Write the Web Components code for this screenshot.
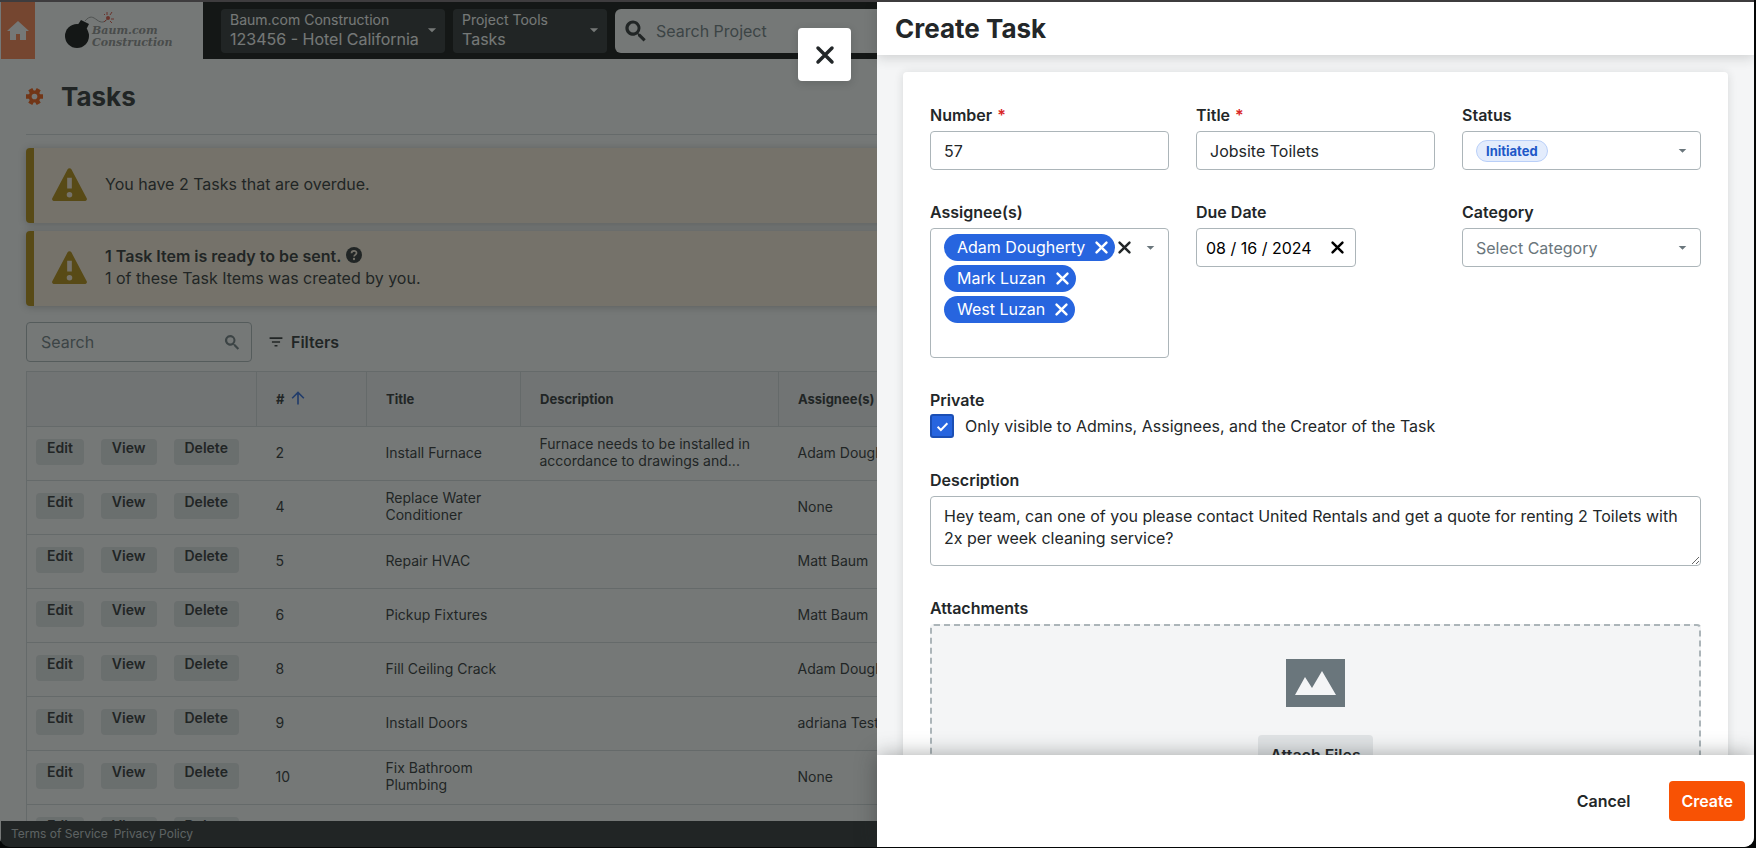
<!DOCTYPE html>
<html lang="en">
<head>
<meta charset="utf-8">
<title>Tasks</title>
<style>
  html, body { height: 100%; }
  body {
    margin: 0;
    background: #050707;
    color: #232729;
    font: 16px/22px Inter, "Liberation Sans", sans-serif;
    --muted: #6a767c;
    --line: #acb5b9;
    --blue: #2765df;
    --orange: #f85204;
  }
</style>
</head>
<body>
<task-app></task-app>

<script>
const icons = {
  home: '<path d="M12 2 1 12h3v9h6v-6h4v6h6v-9h3z"/>',
  caret: '<path d="M5 9h14l-7 7z"/>',
  search: '<path fill-rule="evenodd" d="M9.500 1.500a8 8 0 1 0 4.600 14.500l.5.500v1.200l5.800 5.800 2.300-2.300-5.800-5.800h-1.200l-.6-.6A8 8 0 0 0 9.500 1.500zm0 3.300a4.700 4.700 0 1 1 0 9.400 4.700 4.700 0 0 1 0-9.400z"/>',
  close: '<path d="M5 5 19 19M19 5 5 19" fill="none" stroke="currentColor" stroke-width="3.500" stroke-linecap="round"/>',
  filter: '<path d="M1 4h22v2.800H1zM5 10.500h14v2.800H5zM9.500 17h5v2.800h-5z"/>',
  arrow: '<path d="M12 23V3M2 12.500l10-10 10 10" fill="none" stroke="currentColor" stroke-width="2.800"/>',
  gear: '<circle cx="12" cy="12" r="8.500"/><path d="M0 12h24M6 1.600l12 20.800M18 1.600 6 22.400" stroke="currentColor" stroke-width="6.500"/><circle cx="12" cy="12" r="4" fill="#fff"/>',
  warning: '<path fill-rule="evenodd" d="M10.700 1.600a1.500 1.500 0 0 1 2.600 0L23.800 21.400a1.300 1.300 0 0 1-1.100 1.900H1.300A1.300 1.300 0 0 1 .2 21.400zM10.400 7.400v7.300h3.200V7.400zM12 17.100a1.900 1.900 0 1 0 0 3.800 1.900 1.900 0 0 0 0-3.800z"/>',
  help: '<circle cx="12" cy="12" r="12"/><path d="M8.300 9.300c0-4.800 7.500-4.600 7.500-.3 0 2.700-3.700 2.900-3.700 5.300" fill="none" stroke="#fff0dc" stroke-width="2.600"/><circle cx="12" cy="18" r="1.700" fill="#fff0dc"/>',
  check: '<path d="M3 12.500 9 18.500 21 6" fill="none" stroke="currentColor" stroke-width="3.500"/>'
};

class UiIcon extends HTMLElement {
  connectedCallback() {
    this.attachShadow({ mode: "open" });
    this.shadowRoot.innerHTML = `
      <style>
        :host { display: inline-block; flex: none; width: 24px; height: 24px; }
        svg { display: block; width: 100%; height: 100%; fill: currentColor; }
      </style>
      <svg viewBox="0 0 24 24" aria-hidden="true">${icons[this.getAttribute("name")]}</svg>
    `;
  }
}
customElements.define("ui-icon", UiIcon);

class CompanyLogo extends HTMLElement {
  connectedCallback() {
    this.attachShadow({ mode: "open" });
    this.shadowRoot.innerHTML = `
      <style>
        :host { display: flex; align-items: center; justify-content: center; width: 168px; background: #fff; }
        .logo { position: relative; width: 108px; height: 36px; }
        svg { display: block; width: 50px; height: 36px; overflow: visible; }
        p {
          position: absolute; left: 27px; top: 12px; margin: 0;
          font: italic bold 11px/12px "DejaVu Serif", serif; color: #8c8c8c;
        }
      </style>
      <div class="logo">
        <svg viewBox="0 0 50 36">
          <path d="M20 8c5-6 8-4 12-1s8 3 11-2" fill="none" stroke="#999"/>
          <circle cx="12" cy="23" r="12"/>
          <path d="m16 7 8 4-3 6-9-4z"/>
          <path d="M42 2V-1M45 2l2-3M46 6h3M45 8l2 2M41 7l-2 2M40 2l-1-1" stroke="#e04a3a"/>
          <circle cx="43" cy="5" r="2" fill="#e04a3a"/>
        </svg>
        <p>Baum.com<br>Construction</p>
      </div>
    `;
  }
}
customElements.define("company-logo", CompanyLogo);

class HeaderPicker extends HTMLElement {
  connectedCallback() {
    this.attachShadow({ mode: "open" });
    this.shadowRoot.innerHTML = `
      <style>
        :host { display: block; }
        button {
          display: flex; align-items: center; justify-content: space-between;
          width: 100%; height: 44px; padding: 0 6px 2px 9px;
          border: 0; border-radius: 4px; background: #232729; color: #fff;
          font: inherit; text-align: left;
        }
        small { display: block; font-size: 14px; line-height: 19px; }
        b { display: block; font-weight: 400; font-size: 16px; line-height: 20px; white-space: nowrap; }
        ui-icon { width: 14px; height: 14px; }
      </style>
      <button type="button">
        <span><small>${this.getAttribute("label")}</small><b>${this.getAttribute("value")}</b></span>
        <ui-icon name="caret"></ui-icon>
      </button>
    `;
  }
}
customElements.define("header-picker", HeaderPicker);

class AppHeader extends HTMLElement {
  connectedCallback() {
    this.attachShadow({ mode: "open" });
    this.shadowRoot.innerHTML = `
      <style>
        :host { display: flex; flex: none; height: 57px; background: #000; }
        .home {
          display: flex; align-items: center; justify-content: center;
          width: 34px; background: #ff7d45; color: #fff;
        }
        .bar { flex: 1; display: flex; align-items: center; gap: 8px; padding: 0 26px 0 18px; }
        .project { width: 224px; }
        .tools { width: 154px; }
        .search {
          flex: 1; display: flex; align-items: center; gap: 7px;
          height: 44px; box-sizing: border-box; padding-left: 9px;
          border-radius: 6px; background: #fff;
        }
        .search ui-icon { width: 23px; height: 23px; }
        input { flex: 1; border: 0; background: none; font: inherit; outline: 0; }
        input::placeholder { color: #6a767c; opacity: 1; }
      </style>
      <a class="home" href="#" aria-label="Home"><ui-icon name="home"></ui-icon></a>
      <company-logo></company-logo>
      <div class="bar">
        <header-picker class="project" label="Baum.com Construction" value="123456 - Hotel California"></header-picker>
        <header-picker class="tools" label="Project Tools" value="Tasks"></header-picker>
        <div class="search">
          <ui-icon name="search"></ui-icon>
          <input type="search" aria-label="Search Project" placeholder="Search Project">
        </div>
      </div>
    `;
  }
}
customElements.define("app-header", AppHeader);

class AlertBanner extends HTMLElement {
  connectedCallback() {
    this.attachShadow({ mode: "open" });
    this.shadowRoot.innerHTML = `
      <style>
        :host {
          display: flex; align-items: center; gap: 18px;
          height: 75px; box-sizing: border-box; padding: 0 0 3px 18px;
          border-left: 8px solid #b38600; border-radius: 4px;
          background: #fff0dc; box-shadow: 0 1px 8px rgba(35, 39, 41, .3);
        }
        ui-icon { width: 35px; height: 35px; color: #b38600; }
      </style>
      <ui-icon name="warning"></ui-icon>
      <div><slot></slot></div>
    `;
  }
}
customElements.define("alert-banner", AlertBanner);

const tasks = [
  ["2", "Install Furnace", "Furnace needs to be installed in accordance to drawings and...", "Adam Dougherty"],
  ["4", "Replace Water Conditioner", "", "None"],
  ["5", "Repair HVAC", "", "Matt Baum"],
  ["6", "Pickup Fixtures", "", "Matt Baum"],
  ["8", "Fill Ceiling Crack", "", "Adam Dougherty"],
  ["9", "Install Doors", "", "adriana Test"],
  ["10", "Fix Bathroom Plumbing", "", "None"],
  ["", "", "", ""]
];

class TaskTable extends HTMLElement {
  connectedCallback() {
    this.attachShadow({ mode: "open" });
    this.shadowRoot.innerHTML = `
      <style>
        :host { display: block; }
        table {
          width: 100%; table-layout: fixed; border-collapse: collapse;
          border: 1px solid #d6dadc; font-size: 14px; line-height: 17px;
        }
        th, td { padding: 0 19px; text-align: left; }
        th { height: 54px; background: #f4f5f6; border: 1px solid #d6dadc; font-size: 13px; font-weight: 700; }
        td { height: 50px; padding-bottom: 3px; border-bottom: 1px solid #d6dadc; }
        th ui-icon { width: 14px; height: 14px; margin-left: 3px; color: #2563de; vertical-align: -1px; }
        td.actions { padding: 0 9px 3px; }
        .actions div { display: flex; gap: 17px; }
        button {
          display: flex; align-items: flex-start; height: 26px; padding: 0 11px;
          border: 0; border-radius: 4px; background: #e3e6e8; color: #232729;
          font: 600 14px/17px Inter, sans-serif;
        }
      </style>
      <table>
        <colgroup>
          <col style="width: 230px"><col style="width: 110px"><col style="width: 154px">
          <col style="width: 258px"><col>
        </colgroup>
        <thead>
          <tr><th></th><th># <ui-icon name="arrow"></ui-icon></th><th>Title</th><th>Description</th><th>Assignee(s)</th></tr>
        </thead>
        <tbody>
          ${tasks.map(task => `
            <tr>
              <td class="actions"><div>
                <button type="button">Edit</button>
                <button type="button">View</button>
                <button type="button">Delete</button>
              </div></td>
              ${task.map(cell => `<td>${cell}</td>`).join("")}
            </tr>`).join("")}
        </tbody>
      </table>
    `;
  }
}
customElements.define("task-table", TaskTable);

class TasksPage extends HTMLElement {
  connectedCallback() {
    this.attachShadow({ mode: "open" });
    this.shadowRoot.innerHTML = `
      <style>
        :host { display: block; overflow: hidden; padding: 0 26px 0 25px; background: #fff; }
        header { display: flex; align-items: center; gap: 18px; height: 75px; border-bottom: 1px solid #d6dadc; }
        header ui-icon { width: 17px; height: 17px; color: var(--orange); }
        h1 { margin: 0; font-size: 26px; line-height: 32px; font-weight: 700; }
        .alerts { display: flex; flex-direction: column; gap: 8px; padding: 13px 0 16px; }
        strong { font-weight: 600; }
        strong ui-icon { width: 16px; height: 16px; margin-left: 1px; vertical-align: -1px; }
        .tools { display: flex; align-items: center; gap: 17px; padding-bottom: 9px; }
        .search {
          display: flex; align-items: center; width: 226px; height: 40px; box-sizing: border-box;
          padding: 0 11px 0 14px; border: 1px solid var(--line); border-radius: 4px; color: var(--muted);
        }
        .search ui-icon { width: 16px; height: 16px; }
        input { flex: 1; min-width: 0; padding: 0; border: 0; background: none; font: inherit; outline: 0; }
        input::placeholder { color: var(--muted); opacity: 1; }
        .filters {
          display: flex; align-items: center; gap: 8px; padding: 0;
          border: 0; background: none; color: inherit; font: inherit; font-weight: 600;
        }
        .filters ui-icon { width: 14px; height: 14px; }
      </style>
      <header><ui-icon name="gear"></ui-icon><h1>Tasks</h1></header>
      <div class="alerts">
        <alert-banner>You have 2 Tasks that are overdue.</alert-banner>
        <alert-banner>
          <strong>1 Task Item is ready to be sent. <ui-icon name="help"></ui-icon></strong><br>
          1 of these Task Items was created by you.
        </alert-banner>
      </div>
      <div class="tools">
        <div class="search">
          <input type="search" aria-label="Search" placeholder="Search">
          <ui-icon name="search"></ui-icon>
        </div>
        <button class="filters" type="button"><ui-icon name="filter"></ui-icon>Filters</button>
      </div>
      <task-table></task-table>
    `;
  }
}
customElements.define("tasks-page", TasksPage);

class AppFooter extends HTMLElement {
  connectedCallback() {
    this.attachShadow({ mode: "open" });
    this.shadowRoot.innerHTML = `
      <style>
        :host {
          display: flex; flex: none; align-items: center; gap: 6px;
          height: 26px; padding-left: 10px; background: #232729; font-size: 12px;
        }
        a { color: #c0c6c9; text-decoration: none; }
      </style>
      <a href="#">Terms of Service</a>
      <a href="#">Privacy Policy</a>
    `;
  }
}
customElements.define("app-footer", AppFooter);

// Shared by every field of the form
const fieldStyles = `
  :host { display: flex; flex-direction: column; gap: 6px; }
  label, .label { font-weight: 600; line-height: 20px; }
  .required { margin-left: 1px; color: #d92626; }
  .box {
    display: flex; align-items: center; box-sizing: border-box; min-height: 39px;
    padding: 0 11px 0 13px; border: 1px solid var(--line); border-radius: 4px; background: #fff;
  }
  .box > ui-icon { width: 13px; height: 13px; color: var(--muted); }
  input, select, textarea {
    min-width: 0; margin: 0; padding: 0; border: 0; outline: 0;
    background: none; color: inherit; font: inherit;
  }
  button { display: flex; padding: 0; border: 0; background: none; color: inherit; }
`;

class TextField extends HTMLElement {
  connectedCallback() {
    const required = this.hasAttribute("required");
    this.attachShadow({ mode: "open" });
    this.shadowRoot.innerHTML = `
      <style>
        ${fieldStyles}
        input { flex: 1; width: 100%; }
      </style>
      <label for="field">${this.getAttribute("label")}${required ? ' <span class="required">*</span>' : ""}</label>
      <div class="box"><input id="field" type="text" value="${this.getAttribute("value")}"></div>
    `;
  }
}
customElements.define("text-field", TextField);

class SelectField extends HTMLElement {
  connectedCallback() {
    this.attachShadow({ mode: "open" });
    this.shadowRoot.innerHTML = `
      <style>
        ${fieldStyles}
        .box { justify-content: space-between; }
        select { flex: 1; appearance: none; color: var(--muted); }
        :host([pill]) select {
          flex: none; height: 22px; padding: 0 9px; border: 1px solid #b9cff8; border-radius: 11px;
          background: #e3ecfc; color: #2058c8; font-size: 13px; line-height: 20px; font-weight: 700;
        }
      </style>
      <label for="field">${this.getAttribute("label")}</label>
      <div class="box">
        <select id="field"><option>${this.getAttribute("value")}</option></select>
        <ui-icon name="caret"></ui-icon>
      </div>
    `;
  }
}
customElements.define("select-field", SelectField);

class DateField extends HTMLElement {
  connectedCallback() {
    this.attachShadow({ mode: "open" });
    this.shadowRoot.innerHTML = `
      <style>
        ${fieldStyles}
        .box { width: 160px; padding: 0 9px; color: #000; }
        input { flex: 1; }
        button ui-icon { width: 17px; height: 17px; }
      </style>
      <label for="field">${this.getAttribute("label")}</label>
      <div class="box">
        <input id="field" type="text" value="${this.getAttribute("value")}">
        <button type="button" aria-label="Clear"><ui-icon name="close"></ui-icon></button>
      </div>
    `;
  }
}
customElements.define("date-field", DateField);

class AssigneeField extends HTMLElement {
  connectedCallback() {
    const names = this.getAttribute("value").split(",");
    this.attachShadow({ mode: "open" });
    this.shadowRoot.innerHTML = `
      <style>
        ${fieldStyles}
        .box { align-items: flex-start; min-height: 130px; padding-top: 5px; }
        ul { flex: 1; min-width: 0; display: flex; flex-direction: column; align-items: flex-start; gap: 4px; margin: 0; padding: 0; list-style: none; }
        li {
          display: flex; align-items: center; gap: 8px; height: 26px; padding: 0 5px 1px 13px;
          border-radius: 14px; background: var(--blue); color: #fff; white-space: nowrap;
        }
        button ui-icon { width: 17px; height: 17px; }
        .tools { display: flex; align-items: center; gap: 11px; height: 27px; }
        .tools > ui-icon { width: 13px; height: 13px; color: var(--muted); }
      </style>
      <span class="label" id="label">${this.getAttribute("label")}</span>
      <div class="box" role="group" aria-labelledby="label">
        <ul>
          ${names.map(name => `
            <li>${name}<button type="button" aria-label="Remove ${name}"><ui-icon name="close"></ui-icon></button></li>
          `).join("")}
        </ul>
        <div class="tools">
          <button type="button" aria-label="Clear all"><ui-icon name="close"></ui-icon></button>
          <ui-icon name="caret"></ui-icon>
        </div>
      </div>
    `;
    this.shadowRoot.querySelectorAll("li button").forEach(button => {
      button.addEventListener("click", () => button.parentElement.remove());
    });
  }
}
customElements.define("assignee-field", AssigneeField);

class CheckField extends HTMLElement {
  connectedCallback() {
    this.attachShadow({ mode: "open" });
    this.shadowRoot.innerHTML = `
      <style>
        ${fieldStyles}
        :host { gap: 4px; }
        label { display: flex; align-items: center; gap: 11px; font-weight: 400; }
        .check { display: grid; width: 24px; height: 24px; place-items: center; color: #fff; }
        .check > * { grid-area: 1 / 1; }
        input {
          appearance: none; box-sizing: border-box; width: 24px; height: 24px;
          border: 2px solid var(--line); border-radius: 3px;
        }
        input:checked { border-color: #1b4fb5; background: var(--blue); }
        ui-icon { width: 13px; height: 13px; pointer-events: none; }
      </style>
      <span class="label">${this.getAttribute("label")}</span>
      <label>
        <span class="check"><input type="checkbox" checked><ui-icon name="check"></ui-icon></span>
        <slot></slot>
      </label>
    `;
  }
}
customElements.define("check-field", CheckField);

class NoteField extends HTMLElement {
  connectedCallback() {
    this.attachShadow({ mode: "open" });
    this.shadowRoot.innerHTML = `
      <style>
        ${fieldStyles}
        textarea {
          box-sizing: border-box; width: 100%; height: 70px; padding: 8px 13px;
          border: 1px solid var(--line); border-radius: 4px; overflow: hidden; resize: vertical;
        }
      </style>
      <label for="field">${this.getAttribute("label")}</label>
      <textarea id="field">${this.textContent.trim()}</textarea>
    `;
  }
}
customElements.define("note-field", NoteField);

class AttachField extends HTMLElement {
  connectedCallback() {
    this.attachShadow({ mode: "open" });
    this.shadowRoot.innerHTML = `
      <style>
        ${fieldStyles}
        .zone {
          display: flex; flex-direction: column; align-items: center; gap: 28px;
          padding: 33px 0; border: 2px dashed var(--line); border-radius: 4px; background: #f4f5f6;
        }
        svg { display: block; width: 59px; height: 48px; }
        button {
          align-items: center; height: 40px; padding: 0 12px; border-radius: 4px;
          background: #e0e3e5; font: inherit; font-weight: 600;
        }
      </style>
      <span class="label">${this.getAttribute("label")}</span>
      <div class="zone">
        <svg viewBox="0 0 59 48" aria-hidden="true">
          <path fill="#6a767c" d="M0 0h59v48H0z"/>
          <path fill="#f4f5f6" d="m9 36 10-18 7 11 10-17 14 24z"/>
        </svg>
        <button type="button">Attach Files</button>
      </div>
    `;
  }
}
customElements.define("attach-field", AttachField);

class CreateDrawer extends HTMLElement {
  connectedCallback() {
    this.attachShadow({ mode: "open" });
    this.shadowRoot.innerHTML = `
      <style>
        :host {
          position: absolute; top: 0; right: 0; bottom: 0; width: 50%;
          display: flex; flex-direction: column; background: #f4f5f6;
        }
        header, footer { position: relative; display: flex; align-items: center; flex: none; background: #fff; }
        header { height: 53px; padding-left: 18px; box-shadow: 0 2px 12px rgba(35, 39, 41, .2); }
        h2 { margin: 0; font-size: 26px; line-height: 32px; font-weight: 700; }
        main { flex: 1; min-height: 0; overflow: hidden; padding: 17px 26px 0; }
        form {
          display: grid; grid-template-columns: repeat(3, minmax(0, 1fr)); gap: 32px 27px;
          align-items: start; padding: 33px 27px;
          border-radius: 4px; background: #fff; box-shadow: 0 1px 10px rgba(35, 39, 41, .14);
        }
        .wide { grid-column: 1 / -1; }
        footer {
          justify-content: flex-end; gap: 27px; height: 92px; padding-right: 9px;
          box-shadow: 0 0 20px rgba(35, 39, 41, .4);
        }
        button {
          height: 40px; padding: 0 12px; border: 0; border-radius: 4px;
          background: none; color: inherit; font: inherit; font-weight: 600;
        }
        .create { background: var(--orange); color: #fff; }
        .close {
          position: absolute; top: 26px; right: calc(100% + 26px);
          display: flex; align-items: center; justify-content: center;
          width: 53px; height: 53px; padding: 0; background: #fff; box-shadow: 0 2px 8px rgba(35, 39, 41, .2);
        }
      </style>
      <button class="close" type="button" aria-label="Close"><ui-icon name="close"></ui-icon></button>
      <header><h2>Create Task</h2></header>
      <main>
        <form>
          <text-field label="Number" value="57" required></text-field>
          <text-field label="Title" value="Jobsite Toilets" required></text-field>
          <select-field label="Status" value="Initiated" pill></select-field>
          <assignee-field label="Assignee(s)" value="Adam Dougherty,Mark Luzan,West Luzan"></assignee-field>
          <date-field label="Due Date" value="08 / 16 / 2024"></date-field>
          <select-field label="Category" value="Select Category"></select-field>
          <check-field class="wide" label="Private">Only visible to Admins, Assignees, and the Creator of the Task</check-field>
          <note-field class="wide" label="Description">Hey team, can one of you please contact United Rentals and get a quote for renting 2 Toilets with 2x per week cleaning service?</note-field>
          <attach-field class="wide" label="Attachments"></attach-field>
        </form>
      </main>
      <footer>
        <button type="button">Cancel</button>
        <button class="create" type="button">Create</button>
      </footer>
    `;
  }
}
customElements.define("create-drawer", CreateDrawer);

class TaskApp extends HTMLElement {
  connectedCallback() {
    this.attachShadow({ mode: "open" });
    this.shadowRoot.innerHTML = `
      <style>
        :host { display: block; box-sizing: border-box; height: 100%; padding: 0 2px 1px 0; }
        .window {
          position: relative; display: flex; flex-direction: column; box-sizing: border-box;
          height: 100%; overflow: hidden; border-top: 2px solid #3e3c3e; border-radius: 0 0 10px 10px;
        }
        .frame { flex: 1; min-height: 0; display: flex; flex-direction: column; border-left: 1px solid #fff; }
        tasks-page { flex: 1; min-height: 0; }
        .shade { position: absolute; inset: 0; background: rgba(32, 37, 36, .62); }
      </style>
      <div class="window">
        <div class="frame">
          <app-header></app-header>
          <tasks-page></tasks-page>
          <app-footer></app-footer>
        </div>
        <div class="shade"></div>
        <create-drawer></create-drawer>
      </div>
    `;
  }
}
customElements.define("task-app", TaskApp);
</script>
</body>
</html>
